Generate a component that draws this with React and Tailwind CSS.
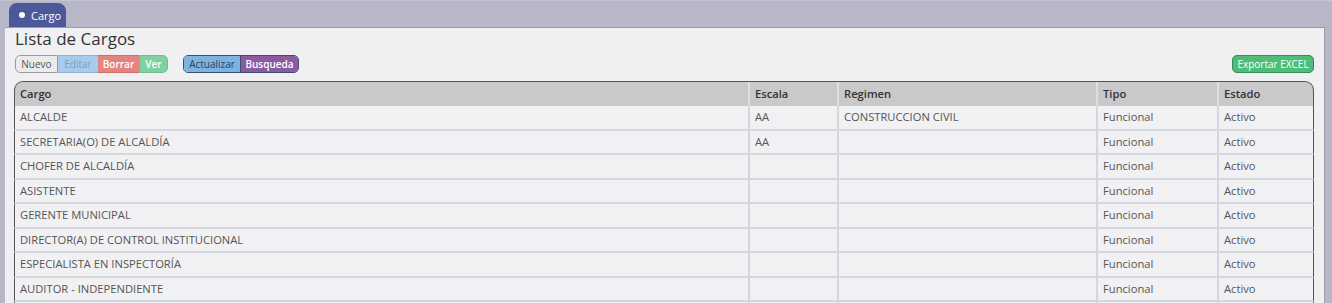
const rows = [
  ["ALCALDE", "AA", "CONSTRUCCION CIVIL", "Funcional", "Activo"],
  ["SECRETARIA(O) DE ALCALDÍA", "AA", "", "Funcional", "Activo"],
  ["CHOFER DE ALCALDÍA", "", "", "Funcional", "Activo"],
  ["ASISTENTE", "", "", "Funcional", "Activo"],
  ["GERENTE MUNICIPAL", "", "", "Funcional", "Activo"],
  ["DIRECTOR(A) DE CONTROL INSTITUCIONAL", "", "", "Funcional", "Activo"],
  ["ESPECIALISTA EN INSPECTORÍA", "", "", "Funcional", "Activo"],
  ["AUDITOR - INDEPENDIENTE", "", "", "Funcional", "Activo"],
  ["", "", "", "", ""],
];

const cols = "grid grid-cols-[733px_89px_259px_121px_98px]";

export default function App() {
  return (
    <div
      className="w-[1332px] h-[303px] overflow-hidden bg-[#b8b7c7] flex flex-col"
      style={{ fontFamily: '"Open Sans", sans-serif' }}
    >
      <div className="h-[3px] border-t border-[#c4c3d1] shrink-0" />
      <div className="pl-[9px] flex shrink-0">
        <div className="w-[57px] h-[24px] bg-[#4b5899] rounded-t-[8px] flex items-center pl-[10px] gap-[6px] text-white text-[11px]">
          <span className="w-[6px] h-[6px] rounded-full bg-white" />
          <span className="leading-none">Cargo</span>
        </div>
      </div>
      <div className="ml-[5px] w-[1320px] flex-1 bg-[#f0f0f2] border-t border-r border-[#9d9ca8] pl-[9px] pr-[8px]">
        <div className="text-[17px] leading-[22px] text-[#333] pl-[1px]">Lista de Cargos</div>
        <div className="flex items-center justify-between mt-[5px] pl-[1px]">
          <div className="flex items-center gap-[15px]">
            <div className="flex h-[18px] text-[10px] leading-none rounded-[5px] overflow-hidden">
              <div className="w-[43px] flex items-center justify-center bg-[#ebebeb] text-[#555] border border-[#9a9a9a] rounded-l-[5px]">Nuevo</div>
              <div className="w-[40px] flex items-center justify-center bg-[#a7cbec] text-[#7f9fbd] border-y border-[#8fb4d8]">Editar</div>
              <div className="w-[41px] flex items-center justify-center bg-[#e5837e] text-white font-semibold border-y border-[#d26d68]">Borrar</div>
              <div className="w-[29px] flex items-center justify-center bg-[#7fd0a2] text-white font-semibold border border-[#6cbf8f] rounded-r-[5px]">Ver</div>
            </div>
            <div className="flex h-[18px] text-[10px] leading-none rounded-[5px] overflow-hidden border border-[#3c4f6e]">
              <div className="w-[57px] flex items-center justify-center bg-[#7db3e3] text-[#2d3e55] border-r border-[#3c4f6e]">Actualizar</div>
              <div className="w-[57px] flex items-center justify-center bg-[#8c5aa0] text-white font-semibold">Busqueda</div>
            </div>
          </div>
          <div className="w-[82px] h-[18px] mr-[2px] flex items-center justify-center rounded-[5px] bg-[#4dbd78] border border-[#2f8d55] text-white text-[10px] leading-none">
            Exportar EXCEL
          </div>
        </div>
        <div className="mt-[8px] w-[1300px] text-[11.2px]">
          <div className={`${cols} h-[25px] bg-[#c9c9c9] border border-b-0 border-[#555] rounded-t-[9px] font-semibold text-[#333]`}>
            {["Cargo", "Escala", "Regimen", "Tipo", "Estado"].map((h, i) => (
              <div key={h} className={`flex items-center pl-[5px] ${i > 0 ? "border-l-2 border-[#dedede]" : ""}`}>{h}</div>
            ))}
          </div>
          {rows.map((r, ri) => (
            <div
              key={ri}
              className={`${cols} ${ri % 2 === 0 ? "h-[25px]" : "h-[24px]"} bg-[#f1f1f3] border-x border-[#555] border-b-2 border-b-[#d4d7dd] text-[#555]`}
            >
              {r.map((c, ci) => (
                <div key={ci} className={`flex items-center pl-[5px] whitespace-nowrap ${ci > 0 ? "border-l-2 border-[#d4d7dd]" : ""}`}>{c}</div>
              ))}
            </div>
          ))}
        </div>
      </div>
    </div>
  );
}
